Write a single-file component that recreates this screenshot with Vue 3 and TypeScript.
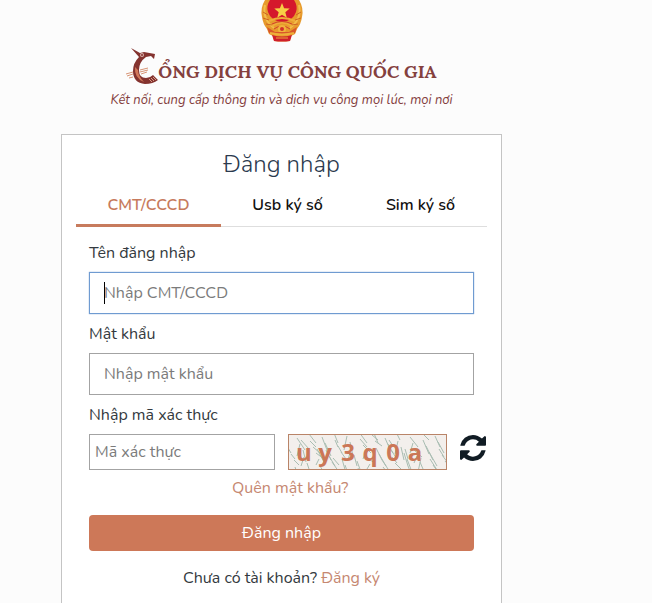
<script setup lang="ts">
import { ref } from 'vue'

interface Tab {
  id: string
  label: string
}

interface Glyph {
  char: string
  x: number
}

const tabs: Tab[] = [
  { id: 'id-card', label: 'CMT/CCCD' },
  { id: 'usb', label: 'Usb ký số' },
  { id: 'sim', label: 'Sim ký số' },
]
const activeTab = ref('id-card')

const username = ref('')
const password = ref('')
const code = ref('')

const glyphs: Glyph[] = [
  { char: 'u', x: 15 },
  { char: 'y', x: 36 },
  { char: '3', x: 59 },
  { char: 'q', x: 81 },
  { char: '0', x: 104 },
  { char: 'a', x: 126 },
]

// Slanted strokes scattered over the captcha on a jittered grid
const noise: string[] = Array.from({ length: 80 }, (_, i) => {
  const col = i % 20
  const row = Math.floor(i / 20)
  const x = col * 8 + ((i * 37) % 11) - 4
  const y = row * 9 + ((i * 29) % 11) - 4
  const dx = i % 7 === 0 ? -3 : 2 + ((i * 13) % 7)
  const dy = 5 + ((i * 17) % 10)
  return `M${x} ${y}l${dx} ${dy}`
})
</script>

<template>
  <main class="page">
    <header class="brand">
      <svg class="emblem" viewBox="0 0 44 42" aria-hidden="true">
        <path d="M5 0h34q5 8 3 17-1 7-5 12l-2 5-4 2-1 5q-8 1-16 0l-1-5-4-2-2-5Q3 24 2 17 0 8 5 0z" fill="#e79a2c" />
        <path d="M10 0h24q4 6 2 12-3 9-14 10Q11 21 8 12 6 6 10 0z" fill="#d5182c" />
        <path d="M22 3l2.100 5.300 5.600.3-4.400 3.600 1.500 5.500L22 14.700l-4.800 3 1.500-5.500-4.400-3.600 5.600-.3z" fill="#f7cf45" />
        <path d="M5 5q-3 14 9 23M39 5q3 14-9 23" fill="none" stroke="#f3bd4a" stroke-width="2" />
        <path d="M3 12l5 3M3 18l6 2M6 24l6 1M41 12l-5 3M41 18l-6 2M38 24l-6 1" stroke="#cf6424" stroke-width="1" />
        <path d="M9 21q13-6 26 0M12 26q10-7 20 0" fill="none" stroke="#eeae38" stroke-width="2" />
        <path d="M12 24q10-5 20 0M14 29q8-6 16 0" fill="none" stroke="#d2402c" stroke-width="1" />
        <circle cx="22" cy="29" r="3" fill="#d2302c" stroke="#f1b43c" stroke-width="2" />
        <path d="M7 27l8 5h14l8-5-2 6-5 2H14l-5-2z" fill="#d9572a" />
        <path d="M10 33q12 3 24 0" fill="none" stroke="#eeb03a" stroke-width="2" />
        <path d="M12 35q10 3 20 0l-2 6q-8 1-16 0z" fill="#cf1f2b" />
        <path d="M16 38h12" stroke="#eba83a" stroke-width="1" />
      </svg>
      <h1 class="name">
        <svg class="crane" viewBox="0 0 32 36" role="img" aria-label="C">
          <path d="M5 0l9 5 4-1 11 2-1 5-3-3-5 1q-7 5-7 13 0 8 7 8 4 0 7-3l5 5q-5 4-13 4Q7 35 7 23q0-8 6-14z" fill="#84332f" />
          <circle cx="16" cy="7" r="2" fill="#d9b3ac" />
          <circle cx="16" cy="7" r="1" fill="#84332f" />
          <path d="M9 19q-1 11 9 15-6-6-6-12z" fill="#d2785a" />
          <path d="M0 26l7-2M1 28l6-2M3 30l4-1M14 22l8-2M14 24l8-2M15 26l6-2" stroke="#d79475" stroke-width="1" />
          <path d="M23 31l3 3M25 30l3 3M27 29l3 3" stroke="#d99a86" stroke-width="1" />
        </svg>
        <span>ỔNG DỊCH VỤ CÔNG QUỐC GIA</span>
      </h1>
      <p class="slogan">Kết nối, cung cấp thông tin và dịch vụ công mọi lúc, mọi nơi</p>
    </header>

    <section class="card">
      <h2 class="title">Đăng nhập</h2>

      <div class="tabs" role="tablist">
        <button
          v-for="tab in tabs"
          :key="tab.id"
          type="button"
          role="tab"
          class="tab"
          :class="{ active: tab.id === activeTab }"
          :aria-selected="tab.id === activeTab"
          @click="activeTab = tab.id"
        >
          {{ tab.label }}
        </button>
      </div>

      <form class="form" @submit.prevent>
        <label class="label" for="username">Tên đăng nhập</label>
        <div class="field">
          <input id="username" v-model="username" class="input current" type="text" placeholder="Nhập CMT/CCCD" />
          <span v-if="!username" class="caret"></span>
        </div>

        <label class="label" for="password">Mật khẩu</label>
        <div class="field">
          <input id="password" v-model="password" class="input" type="password" placeholder="Nhập mật khẩu" />
        </div>

        <label class="label" for="code">Nhập mã xác thực</label>
        <div class="verify">
          <input id="code" v-model="code" class="input code" type="text" placeholder="Mã xác thực" />
          <svg class="captcha" viewBox="0 0 157 34">
            <path v-for="(d, i) in noise" :key="i" :d="d" class="noise" />
            <text v-for="g in glyphs" :key="g.char" :x="g.x" y="26" class="glyph">{{ g.char }}</text>
          </svg>
          <button class="refresh" type="button" aria-label="Đổi mã">
            <svg viewBox="0 0 1536 1536" aria-hidden="true">
              <path
                fill="#111c24"
                d="M1511 928q0 5-1 7-64 268-268 434.500T764 1536q-146 0-282.500-55T238 1324l-129 129q-19 19-45 19t-45-19-19-45V960q0-26 19-45t45-19h448q26 0 45 19t19 45-19 45l-137 137q71 66 161 102t187 36q134 0 250-65t186-179q11-17 53-117 8-23 30-23h192q13 0 22.500 9.500t9.500 22.500zm25-800v448q0 26-19 45t-45 19h-448q-26 0-45-19t-19-45 19-45l138-138Q969 256 768 256q-134 0-250 65T332 500q-11 17-53 117-8 23-30 23H50q-13 0-22.500-9.500T18 608v-7q65-268 270-434.500T768 0q146 0 284 55.500T1297 212l130-129q19-19 45-19t45 19 19 45z"
              />
            </svg>
          </button>
        </div>

        <a class="link forgot" href="#">Quên mật khẩu?</a>
        <button class="submit" type="submit">Đăng nhập</button>
        <p class="signup">Chưa có tài khoản? <a class="link" href="#">Đăng ký</a></p>
      </form>
    </section>
  </main>
</template>

<style>
html,
body {
  min-height: 100%;
  background: #fcfcfc;
}
</style>

<style scoped>
* {
  box-sizing: border-box;
}

.page {
  padding: 0 150px 0 61px;
  font-family: Nunito, 'Open Sans', 'Noto Sans', sans-serif;
  font-size: 16px;
  line-height: 24px;
  color: #343a40;
}

.brand {
  display: flex;
  flex-direction: column;
  align-items: center;
}

.emblem {
  display: block;
  width: 44px;
  height: 42px;
}

.name {
  display: flex;
  align-items: flex-end;
  margin: 4px 0 0;
  height: 38px;
  font-family: Lora, 'Liberation Serif', serif;
  font-size: 18px;
  font-weight: 700;
  line-height: 24px;
  color: #84403e;
  white-space: nowrap;
}

.crane {
  width: 32px;
  height: 36px;
}

.slogan {
  margin: 4px 0 0;
  font-size: 13px;
  font-style: italic;
  color: #84403e;
  white-space: nowrap;
}

.card {
  margin-top: 22px;
  padding: 14px 14px 24px;
  border: 1px solid #c4c4c4;
  background: #fff;
}

.title {
  margin: 0;
  font-size: 24px;
  font-weight: 300;
  line-height: 30px;
  text-align: center;
  color: #2b3a4e;
}

.tabs {
  display: grid;
  grid-template-columns: 145px 1fr 1fr;
  margin-top: 4px;
  border-bottom: 1px solid #dedede;
}

.tab {
  margin-bottom: -1px;
  padding: 10px 0 7px;
  border: 0;
  border-bottom: 3px solid transparent;
  background: none;
  font: inherit;
  font-weight: 600;
  color: #111;
  cursor: pointer;
}

.tab.active {
  border-bottom-color: #c77b5d;
  border-radius: 2px 2px 0 0;
  color: #c77b5d;
}

.form {
  display: flex;
  flex-direction: column;
  padding: 14px 13px 0;
}

.label {
  margin-bottom: 7px;
}

.field {
  position: relative;
  margin-bottom: 8px;
}

.input {
  display: block;
  width: 100%;
  height: 42px;
  padding: 0 14px;
  border: 1px solid #a3a3a3;
  border-radius: 0;
  outline: 0;
  background: #fff;
  font: inherit;
  color: #343a40;
}

.input::placeholder {
  color: #7b7b7b;
  opacity: 1;
}

.input.current {
  border-color: #6f9bd1;
  box-shadow: 0 0 1px #6f9bd1;
  caret-color: transparent;
}

.caret {
  position: absolute;
  top: 10px;
  left: 15px;
  width: 1px;
  height: 22px;
  background: #000;
}

.verify {
  display: grid;
  grid-template-columns: 186px 159px 26px;
  column-gap: 13px;
  align-items: center;
  margin-right: -12px;
}

.input.code {
  height: 36px;
  padding: 0 5px;
}

.captcha {
  width: 100%;
  height: 36px;
  border: 1px solid #b98468;
  background: #f3efec;
}

.noise {
  fill: none;
  stroke: #a9bdb2;
  stroke-width: 1;
}

.glyph {
  font-family: 'Open Sans', sans-serif;
  font-size: 24px;
  font-weight: 700;
  text-anchor: middle;
  fill: #cb7757;
}

.refresh {
  width: 26px;
  height: 26px;
  margin-top: -9px;
  padding: 0;
  border: 0;
  background: none;
  cursor: pointer;
}

.refresh svg {
  display: block;
  width: 26px;
  height: 26px;
}

.link {
  color: #c68871;
  text-decoration: none;
}

.forgot {
  margin: 6px auto 0 143px;
}

.submit {
  height: 36px;
  margin-top: 15px;
  padding: 0;
  border: 0;
  border-radius: 4px;
  background: #cd7858;
  font: inherit;
  color: #fff;
  cursor: pointer;
}

.signup {
  margin: 15px 0 0;
  text-align: center;
}
</style>
